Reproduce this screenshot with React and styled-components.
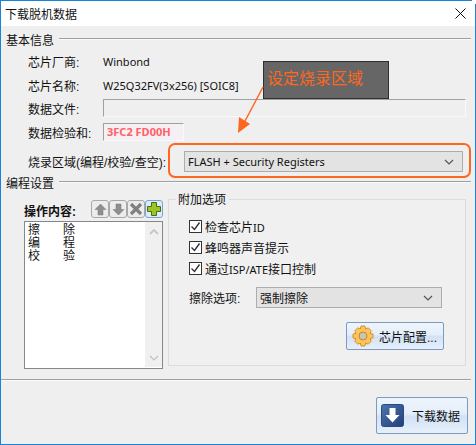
import styled, { createGlobalStyle } from "styled-components"

const GlobalStyle = createGlobalStyle`
    html, body {
        margin: 0;
        padding: 0;
        background: #fff;
    }
    * {
        box-sizing: border-box;
    }
`

const UI_FONT = `"Liberation Sans", "Noto Sans CJK SC", sans-serif`

const Win = styled.div`
    position: relative;
    width: 476px;
    height: 445px;
    display: flex;
    flex-direction: column;
    background: #efefef;
    border: 1px solid #1883d7;
    font-family: ${UI_FONT};
    font-size: 12px;
    color: #111;
    overflow: hidden;
`

const CornerNotch = styled.div`
    position: fixed;
    left: 472px;
    top: 0;
    width: 4px;
    height: 4px;
    background: #fff;
`

const Latin = styled.span`
    font-family: "Noto Sans", sans-serif;
    font-size: 11px;
`

const TitleBar = styled.div`
    height: 25px;
    flex: none;
    background: #fff;
    display: flex;
    align-items: center;
    justify-content: space-between;
    padding: 0 9px 0 4px;
`

const SectionHead = styled.div`
    display: flex;
    align-items: center;
    gap: 5px;
    height: 14px;
    padding: 0 4px 0 5px;
    &::after {
        content: "";
        flex: 1;
        height: 0;
        border-top: 1px solid #a0a0a0;
        border-bottom: 1px solid #fafafa;
    }
`

const Basic = styled.div`
    padding-top: 6px;
    height: 149px;
    flex: none;
`

const InfoRows = styled.div`
    display: flex;
    flex-direction: column;
    padding: 4px 0 0 27px;
`

const InfoRow = styled.div`
    display: flex;
    align-items: center;
    height: 23.5px;
`

const InfoLabel = styled.div`
    width: 75px;
    flex: none;
    white-space: nowrap;
`

const FileInput = styled.div`
    width: 363px;
    height: 18px;
    margin-bottom: 2px;
    border: 1px solid;
    border-color: #a0a0a0 #fafafa #fafafa #a0a0a0;
    background: #efefef;
`

const SumBox = styled.div`
    width: 81px;
    height: 18px;
    border: 1px solid;
    border-color: #a0a0a0 #fafafa #fafafa #a0a0a0;
    background: #f6eff3;
    color: #ff6069;
    font-family: "Noto Sans", sans-serif;
    font-size: 11px;
    font-weight: bold;
    padding-left: 3px;
    line-height: 15px;
    white-space: nowrap;
`

const ComboBox = styled.div`
    width: ${props => props.$w}px;
    height: 21px;
    display: flex;
    align-items: center;
    justify-content: space-between;
    padding: 0 8px 0 3px;
    background: #e3e3e3;
    border: 1px solid #adadad;
    white-space: nowrap;
`

const BurnRow = styled.div`
    display: flex;
    align-items: center;
    height: 21px;
    margin-top: 7px;
    padding-left: 27px;
`

const BurnLabel = styled.div`
    width: 156px;
    flex: none;
    white-space: nowrap;
`

const Settings = styled.div`
    height: 204px;
    flex: none;
    display: flex;
    flex-direction: column;
`

const SettingsBody = styled.div`
    display: flex;
    padding: 10px 0 0 23px;
    gap: 5px;
`

const OpsPane = styled.div`
    width: 139px;
    flex: none;
    padding-top: 1px;
`

const OpsHead = styled.div`
    display: flex;
    align-items: center;
    justify-content: space-between;
    height: 18px;
    margin-bottom: 3px;
`

const OpsTitle = styled.div`
    font-weight: bold;
    padding-top: 3px;
    white-space: nowrap;
`

const ToolGroup = styled.div`
    display: flex;
`

const ToolBtn = styled.div`
    width: 18px;
    height: 18px;
    display: flex;
    align-items: center;
    justify-content: center;
    border: 1px solid ${props => props.$active ? "#7da2ce" : "#a8a8a8"};
    border-radius: 3px;
    background: ${props => props.$active ? "#dcebfc" : "#ececec"};
`

const ListBox = styled.div`
    display: flex;
    height: 148px;
    background: #fff;
    border: 1px solid #828790;
`

const ListItems = styled.div`
    flex: 1;
    padding: 2px 0 0 3px;
`

const ListItem = styled.div`
    display: flex;
    height: 13px;
    line-height: 13px;
    span {
        width: 35px;
    }
`

const ScrollTrack = styled.div`
    width: 17px;
    flex: none;
    margin-bottom: 1px;
    background: #f0f0f0;
    display: flex;
    flex-direction: column;
    justify-content: space-between;
    align-items: center;
    padding: 7px 0 6px;
`

const OptionsBox = styled.div`
    position: relative;
    width: 298px;
    height: 167px;
    padding: 16px 0 0 20px;
    border: 1px solid #dcdcdc;
    background: #f0f0f0;
`

const OptionsLegend = styled.div`
    position: absolute;
    left: 7px;
    top: -7px;
    padding: 0 3px 0 2px;
    background: #efefef;
    line-height: 14px;
`

const CheckRow = styled.label`
    display: flex;
    align-items: center;
    gap: 3px;
    height: 21px;
    white-space: nowrap;
`

const CheckBox = styled.span`
    width: 13px;
    height: 13px;
    flex: none;
    display: flex;
    background: #fff;
    border: 1px solid #333;
`

const EraseRow = styled.div`
    display: flex;
    align-items: center;
    margin-top: 8px;
`

const EraseLabel = styled.div`
    width: 67px;
    flex: none;
    white-space: nowrap;
`

const ConfigRow = styled.div`
    display: flex;
    justify-content: flex-end;
    margin: 14px 21px 0 0;
`

const GlossBtn = styled.div`
    display: flex;
    align-items: center;
    width: ${props => props.$w}px;
    height: ${props => props.$h}px;
    padding-left: ${props => props.$pad}px;
    gap: ${props => props.$gap}px;
    border: 1px solid #7d9ac4;
    border-radius: 2px;
    background: linear-gradient(#eef4fc 0%, #e4eefa 45%, #d2e1f3 52%, #e6f0fb 100%);
    white-space: nowrap;
`

const Footer = styled.div`
    flex: 1;
    border-top: 1px solid #a0a0a0;
    display: flex;
    justify-content: flex-end;
    padding: 17px 3px 0 0;
    margin-right: 4px;
    box-shadow: inset 0 1px 0 #fafafa;
`

const BurnHighlight = styled.div`
    position: absolute;
    left: 167px;
    top: 142px;
    width: 303px;
    height: 35px;
    border: 2px solid #ff6620;
    border-radius: 7px;
    pointer-events: none;
`

const Callout = styled.div`
    position: absolute;
    left: 262px;
    top: 60px;
    width: 126px;
    height: 38px;
    background: #666;
    border: 1px solid #2f2f2f;
    color: #ff6620;
    font-size: 16px;
    line-height: 34px;
    padding-left: 3px;
    white-space: nowrap;
`

const ArrowLayer = styled.svg`
    position: absolute;
    left: 224px;
    top: 79px;
`

const Close = () => (
    <svg width="11" height="11" viewBox="0 0 11 11">
        <path d="M0.5 0.5 L10.5 10.5 M10.5 0.5 L0.5 10.5" stroke="#111" strokeWidth="1" />
    </svg>
)

const Chevron = ({ up, color = "#555", size = 10 }) => (
    <svg width={size} height="6" viewBox="0 0 10 6">
        <path d={up ? "M1 5 L5 1 L9 5" : "M1 1 L5 5 L9 1"} stroke={color} strokeWidth={up ? 2 : 1.2} fill="none" />
    </svg>
)

const Tick = () => (
    <svg width="11" height="11" viewBox="0 0 11 11">
        <path d="M1.5 5.5 L4.5 8.5 L9.5 1.5" stroke="#333" strokeWidth="1.4" fill="none" />
    </svg>
)

const ArrowUpIcon = () => (
    <svg width="13" height="13" viewBox="0 0 13 13">
        <path d="M6.5 1 L12 6.5 L9 6.5 L9 12 L4 12 L4 6.5 L1 6.5 Z" fill="#8f8f8f" stroke="#777" strokeWidth="0.5" />
    </svg>
)

const ArrowDownIcon = () => (
    <svg width="13" height="13" viewBox="0 0 13 13">
        <path d="M4 1 L9 1 L9 6.5 L12 6.5 L6.5 12 L1 6.5 L4 6.5 Z" fill="#8f8f8f" stroke="#777" strokeWidth="0.5" />
    </svg>
)

const CrossIcon = () => (
    <svg width="14" height="14" viewBox="0 0 14 14">
        <path d="M2 2 L12 12 M12 2 L2 12" stroke="#808080" strokeWidth="3.2" />
    </svg>
)

const PlusIcon = () => (
    <svg width="14" height="14" viewBox="0 0 14 14">
        <path d="M4.5 0.5 H9.5 V4.5 H13.5 V9.5 H9.5 V13.5 H4.5 V9.5 H0.5 V4.5 H4.5 Z" fill="#9ac524" stroke="#4e6b12" strokeWidth="1" />
    </svg>
)

const GearIcon = () => (
    <svg width="22" height="22" viewBox="0 0 22 22">
        <path
            d="M9 1 H13 L13.6 4 L16.2 2.8 L19.2 5.8 L18 8.4 L21 9 V13 L18 13.6 L19.2 16.2 L16.2 19.2 L13.6 18 L13 21 H9 L8.4 18 L5.8 19.2 L2.8 16.2 L4 13.6 L1 13 V9 L4 8.4 L2.8 5.8 L5.8 2.8 L8.4 4 Z"
            fill="#fbc55b"
            stroke="#d9922c"
        />
        <circle cx="11" cy="11" r="4" fill="#c9c4b4" stroke="#c8862a" />
    </svg>
)

const DownloadIcon = () => (
    <svg width="23" height="23" viewBox="0 0 23 23">
        <defs>
            <linearGradient id="dl" x1="0" y1="0" x2="1" y2="1">
                <stop offset="0" stopColor="#4f74ad" />
                <stop offset="1" stopColor="#1f3f7c" />
            </linearGradient>
        </defs>
        <rect x="0.5" y="0.5" width="22" height="22" rx="2" fill="url(#dl)" stroke="#2b4a83" />
        <path d="M8.5 4 H14.5 V11 H18.5 L11.5 18.5 L4.5 11 H8.5 Z" fill="#fff" />
    </svg>
)

const ops = [["擦", "除"], ["编", "程"], ["校", "验"]]

export default function App() {
    return (
        <>
            <GlobalStyle />
            <Win>
                <CornerNotch />
                <TitleBar>
                    <span>下载脱机数据</span>
                    <Close />
                </TitleBar>
                <Basic>
                    <SectionHead>基本信息</SectionHead>
                    <InfoRows>
                        <InfoRow><InfoLabel>芯片厂商:</InfoLabel><Latin>Winbond</Latin></InfoRow>
                        <InfoRow><InfoLabel>芯片名称:</InfoLabel><Latin>W25Q32FV(3x256) [SOIC8]</Latin></InfoRow>
                        <InfoRow><InfoLabel>数据文件:</InfoLabel><FileInput /></InfoRow>
                        <InfoRow><InfoLabel>数据检验和:</InfoLabel><SumBox>3FC2 FD00H</SumBox></InfoRow>
                    </InfoRows>
                    <BurnRow>
                        <BurnLabel>烧录区域(编程/校验/查空):</BurnLabel>
                        <ComboBox $w={279}>
                            <Latin>FLASH + Security Registers</Latin>
                            <Chevron />
                        </ComboBox>
                    </BurnRow>
                </Basic>
                <Settings>
                    <SectionHead>编程设置</SectionHead>
                    <SettingsBody>
                        <OpsPane>
                            <OpsHead>
                                <OpsTitle>操作内容:</OpsTitle>
                                <ToolGroup>
                                    <ToolBtn><ArrowUpIcon /></ToolBtn>
                                    <ToolBtn><ArrowDownIcon /></ToolBtn>
                                    <ToolBtn><CrossIcon /></ToolBtn>
                                    <ToolBtn $active><PlusIcon /></ToolBtn>
                                </ToolGroup>
                            </OpsHead>
                            <ListBox>
                                <ListItems>
                                    {ops.map(([a, b]) => (
                                        <ListItem key={a}><span>{a}</span>{b}</ListItem>
                                    ))}
                                </ListItems>
                                <ScrollTrack>
                                    <Chevron up color="#c8c8c8" />
                                    <Chevron color="#c0c0c0" />
                                </ScrollTrack>
                            </ListBox>
                        </OpsPane>
                        <OptionsBox>
                            <OptionsLegend>附加选项</OptionsLegend>
                            <CheckRow><CheckBox><Tick /></CheckBox><span>检查芯片<Latin>ID</Latin></span></CheckRow>
                            <CheckRow><CheckBox><Tick /></CheckBox>蜂鸣器声音提示</CheckRow>
                            <CheckRow><CheckBox><Tick /></CheckBox><span>通过<Latin>ISP/ATE</Latin>接口控制</span></CheckRow>
                            <EraseRow>
                                <EraseLabel>擦除选项:</EraseLabel>
                                <ComboBox $w={186}>
                                    强制擦除
                                    <Chevron />
                                </ComboBox>
                            </EraseRow>
                            <ConfigRow>
                                <GlossBtn $w={98} $h={28} $pad={5} $gap={5}>
                                    <GearIcon />
                                    芯片配置...
                                </GlossBtn>
                            </ConfigRow>
                        </OptionsBox>
                    </SettingsBody>
                </Settings>
                <Footer>
                    <GlossBtn $w={92} $h={37} $pad={4} $gap={8}>
                        <DownloadIcon />
                        下载数据
                    </GlossBtn>
                </Footer>
                <BurnHighlight />
                <Callout>设定烧录区域</Callout>
                <ArrowLayer width="50" height="70" viewBox="0 0 50 70">
                    <path d="M38 7 L19 43" stroke="#ff6620" strokeWidth="1.5" />
                    <path d="M13 53 L14 37 L25 44 Z" fill="#ff6620" />
                </ArrowLayer>
            </Win>
        </>
    )
}
